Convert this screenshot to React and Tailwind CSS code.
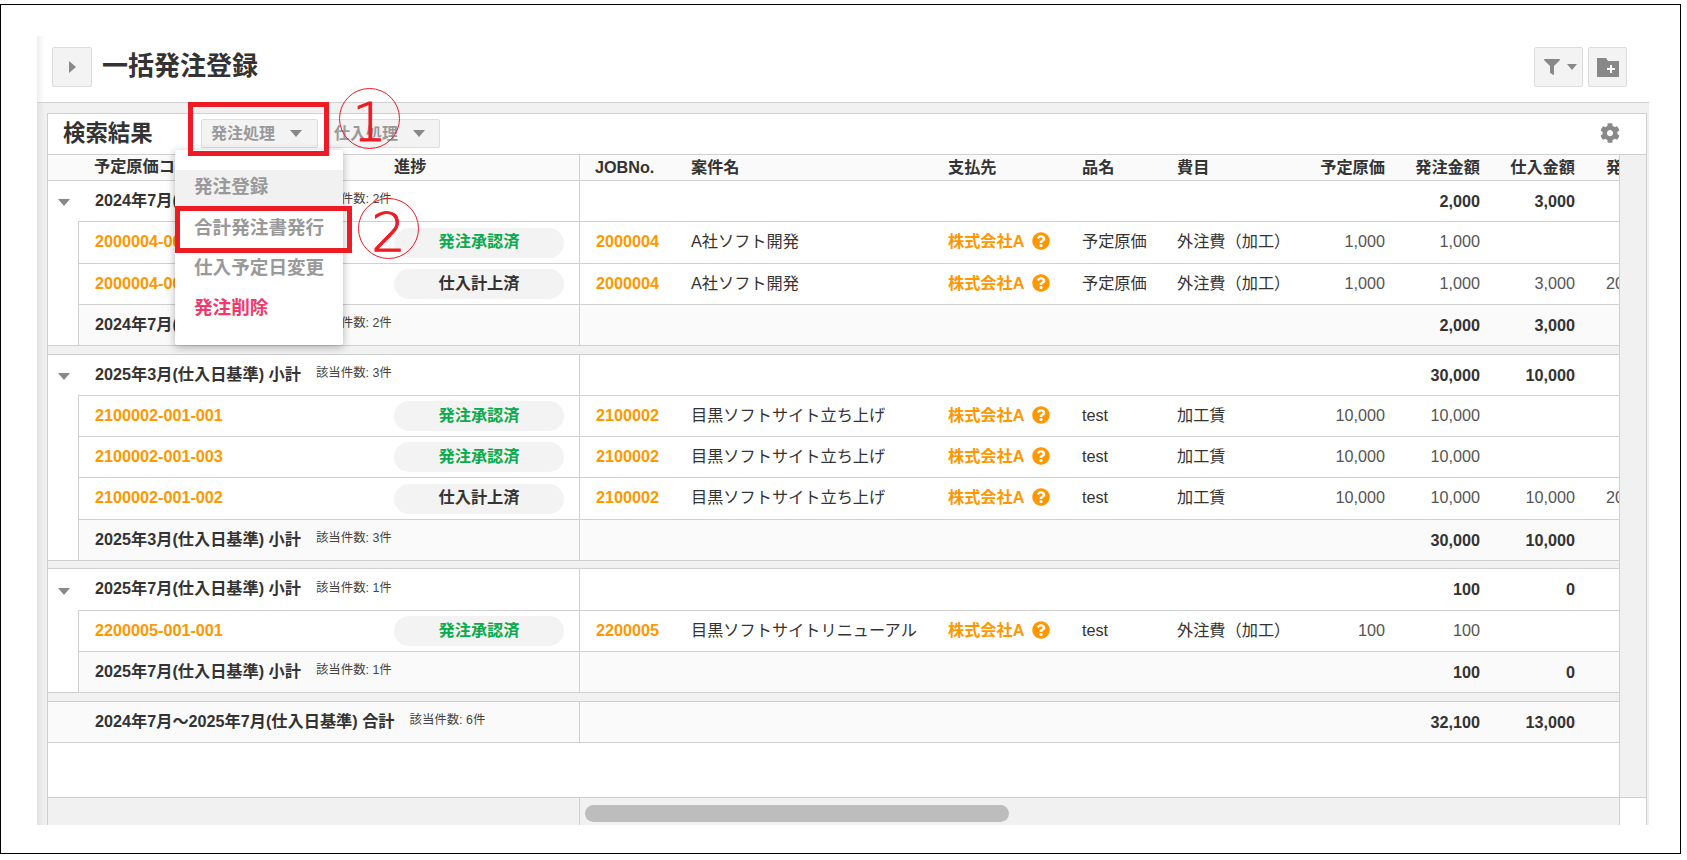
import React from 'react';
import { FaFilter, FaCog, FaQuestionCircle } from 'react-icons/fa';

const rowGrid = 'grid h-full grid-cols-[96px_257px_134px_95px_238px_95px_95px_30px] items-center pb-[2px]';
const line = 'border-[#d0d0d0]';
const orange = 'text-[#ff9800]';

// Small downward triangle used on buttons and group rows
const Caret = ({ className = '' }) => (
    <span className={`inline-block h-0 w-0 border-x-[6px] border-t-[7px] border-x-transparent border-t-[#888] ${className}`} />
);

const Num = ({ children, bold }) => (
    <div className={`pr-[15px] text-right ${bold ? 'font-bold text-[#333]' : 'text-[#555]'}`}>{children}</div>
);

const Summary = ({ label, count }) => (
    <div className="flex items-center whitespace-nowrap pb-[2px]">
        <span className="font-bold text-[#333]">{label}</span>
        <span className="-mt-[1px] ml-[15px] text-[12.4px] text-[#444]">該当件数: {count}件</span>
    </div>
);

const SummaryTotals = ({ order, purchase }) => (
    <div className={rowGrid}>
        <div /><div /><div /><div /><div />
        <div className="pt-[2px]"><Num bold>{order}</Num></div>
        <div className="pt-[2px]"><Num bold>{purchase}</Num></div>
    </div>
);

const GroupRow = ({ h, label, count, order, purchase }) => (
    <div className={`flex ${h}`}>
        <div className="flex w-[30px] items-center pl-[10px]"><Caret className="mt-[2px]" /></div>
        <div className={`flex w-[501px] items-center border-b pl-[17px] ${line}`}>
            <Summary label={label} count={count} />
        </div>
        <div className={`w-[1040px] border-b border-l ${line}`}>
            <SummaryTotals order={order} purchase={purchase} />
        </div>
    </div>
);

const DataRow = ({ h, code, done, job, name, item, kind, cost, order, purchase, date }) => (
    <div className={`flex ${h}`}>
        <div className="w-[30px]" />
        <div className={`flex w-[501px] items-center border-b border-l pl-[16px] ${line}`}>
            <div className={`w-[299px] pb-[2px] font-bold ${orange}`}>{code}</div>
            <div className={`flex h-[30px] w-[170px] items-center justify-center rounded-full bg-[#f3f3f3] pb-[2px] font-bold ${done ? 'text-[#333]' : 'text-[#0aaa4e]'}`}>
                {done ? '仕入計上済' : '発注承認済'}
            </div>
        </div>
        <div className={`w-[1040px] overflow-hidden border-b border-l ${line}`}>
            <div className={rowGrid}>
                <div className={`pl-[16px] font-bold ${orange}`}>{job}</div>
                <div className="whitespace-nowrap pl-[15px] text-[#333]">{name}</div>
                <div className={`flex items-center pl-[15px] font-bold ${orange}`}>
                    株式会社A
                    <FaQuestionCircle className="ml-[8px] text-[18px]" />
                </div>
                <div className="pl-[15px] text-[#333]">{item}</div>
                <div className="flex justify-between">
                    <span className="pl-[15px] text-[#333]">{kind}</span>
                    <Num>{cost}</Num>
                </div>
                <Num>{order}</Num>
                <Num>{purchase}</Num>
                <div className="overflow-hidden whitespace-nowrap pl-[16px] text-[#555]">{date}</div>
            </div>
        </div>
    </div>
);

const SubtotalRow = ({ h, label, count, order, purchase }) => (
    <div className={`flex ${h} border-b ${line}`}>
        <div className="w-[30px]" />
        <div className={`flex w-[501px] items-center border-l bg-[#fafafa] pl-[16px] ${line}`}>
            <Summary label={label} count={count} />
        </div>
        <div className={`w-[1040px] border-l bg-[#fafafa] ${line}`}>
            <SummaryTotals order={order} purchase={purchase} />
        </div>
    </div>
);

const Band = ({ h }) => <div className={`${h} border-b bg-[#f1f1f1] ${line}`} />;

const MenuItem = ({ className = '', children }) => (
    <div className={`flex h-[40px] items-center pb-[5px] pl-[19px] text-[18.6px] font-bold ${className}`}>{children}</div>
);

const NumberMark = ({ className, children }) => (
    <div className={`absolute flex h-[61px] w-[61px] items-center justify-center rounded-full border-[1.5px] border-[#ed1c24] pt-[9px] text-[54px] font-extralight leading-none text-[#ed1c24] [-webkit-text-stroke:1px_#ed1c24] [font-family:'DejaVu_Sans',sans-serif] ${className}`}>
        {children}
    </div>
);

export default function App() {
    return (
        <div className="relative h-[860px] w-[1687px] overflow-hidden bg-white pt-[4px] text-[16.2px] [font-family:'Liberation_Sans','Noto_Sans_CJK_JP',sans-serif]">
            <div className="h-[850px] w-[1681px] border border-black pl-[36px] pt-[31px]">
                <div className="flex h-[789px] w-[1612px] flex-col">
                    {/* Page title */}
                    <div className="flex h-[66px] bg-[linear-gradient(90deg,#f0f0f0,#fff_8px)] pl-[15px] pr-[22px] pt-[11px]">
                        <div className="flex h-[40px] w-[40px] items-center justify-center rounded-[2px] border border-[#ddd] bg-[#f3f3f3]">
                            <span className="h-0 w-0 border-y-[6px] border-l-[7px] border-y-transparent border-l-[#888]" />
                        </div>
                        <h1 className="ml-[10px] text-[26px] font-bold leading-[38px] text-[#333]">一括発注登録</h1>
                        <div className="ml-auto flex h-[40px] w-[49px] items-center rounded-[2px] border border-[#ddd] bg-[#f3f3f3] pl-[9px]">
                            <FaFilter className="text-[16px] text-[#888]" />
                            <span className="ml-[7px] h-0 w-0 border-x-[5px] border-t-[6px] border-x-transparent border-t-[#888]" />
                        </div>
                        <div className="ml-[5px] flex h-[40px] w-[39px] items-center justify-center rounded-[2px] border border-[#ddd] bg-[#f3f3f3]">
                            <svg width="22" height="19" viewBox="0 0 22 19">
                                <path d="M0 0h9l2 3h11v16H0z" fill="#888" />
                                <path d="M14 7v8M10 11h8" stroke="#fff" strokeWidth="2" />
                            </svg>
                        </div>
                    </div>

                    {/* Result panel */}
                    <div className={`min-h-0 flex-1 border-t bg-[linear-gradient(90deg,#e2e2e2,#f1f1f1_8px)] pl-[10px] pr-[2px] pt-[10px] ${line}`}>
                        <div className={`flex h-full flex-col border-x border-t bg-white ${line}`}>
                            <div className={`flex h-[41px] shrink-0 items-center border-b pl-[15px] pr-[26px] ${line}`}>
                                <div className="-mt-[1px] w-[138px] text-[22.4px] font-bold text-[#333]">検索結果</div>
                                <div className="-mt-[1px] flex h-[29px] w-[117px] items-center rounded-[2px] border border-[#ddd] bg-[#f3f3f3] pl-[9px] text-[16px] font-bold text-[#999]">
                                    発注処理<Caret className="ml-[15px]" />
                                </div>
                                <div className="-mt-[1px] ml-[7px] flex h-[29px] w-[115px] items-center rounded-[2px] border border-[#ddd] bg-[#f3f3f3] pl-[8px] text-[16px] font-bold text-[#999]">
                                    仕入処理<Caret className="ml-[15px]" />
                                </div>
                                <FaCog className="-mt-[2px] ml-auto text-[20px] text-[#888]" />
                            </div>

                            <div className="flex min-h-0 flex-1">
                                <div className="flex w-[1571px] flex-col">
                                    <div className={`flex h-[26px] shrink-0 border-b bg-[#fafafa] font-bold text-[#333] ${line}`}>
                                        <div className="flex w-[531px] items-center pb-[2px] pl-[46px]">
                                            <div className="w-[300px]">予定原価コード</div>
                                            <div>進捗</div>
                                        </div>
                                        <div className={`w-[1040px] overflow-hidden border-l ${line}`}>
                                            <div className={rowGrid}>
                                                <div className="pl-[15px]">JOBNo.</div>
                                                <div className="pl-[15px]">案件名</div>
                                                <div className="pl-[15px]">支払先</div>
                                                <div className="pl-[15px]">品名</div>
                                                <div className="flex justify-between">
                                                    <span className="pl-[15px]">費目</span>
                                                    <div className="pr-[15px]">予定原価</div>
                                                </div>
                                                <div className="pr-[15px] text-right">発注金額</div>
                                                <div className="pr-[15px] text-right">仕入金額</div>
                                                <div className="overflow-hidden whitespace-nowrap pl-[16px]">発注日</div>
                                            </div>
                                        </div>
                                    </div>

                                    <GroupRow h="h-[41px]" label="2024年7月(仕入日基準) 小計" count={2} order="2,000" purchase="3,000" />
                                    <DataRow h="h-[42px]" code="2000004-001-001" job="2000004" name="A社ソフト開発" item="予定原価" kind="外注費（加工）" cost="1,000" order="1,000" />
                                    <DataRow h="h-[41px]" code="2000004-001-002" done job="2000004" name="A社ソフト開発" item="予定原価" kind="外注費（加工）" cost="1,000" order="1,000" purchase="3,000" date="2024/07/31" />
                                    <SubtotalRow h="h-[41px]" label="2024年7月(仕入日基準) 小計" count={2} order="2,000" purchase="3,000" />
                                    <Band h="h-[9px]" />

                                    <GroupRow h="h-[41px]" label="2025年3月(仕入日基準) 小計" count={3} order="30,000" purchase="10,000" />
                                    <DataRow h="h-[41px]" code="2100002-001-001" job="2100002" name="目黒ソフトサイト立ち上げ" item="test" kind="加工賃" cost="10,000" order="10,000" />
                                    <DataRow h="h-[41px]" code="2100002-001-003" job="2100002" name="目黒ソフトサイト立ち上げ" item="test" kind="加工賃" cost="10,000" order="10,000" />
                                    <DataRow h="h-[42px]" code="2100002-001-002" done job="2100002" name="目黒ソフトサイト立ち上げ" item="test" kind="加工賃" cost="10,000" order="10,000" purchase="10,000" date="2025/03/31" />
                                    <SubtotalRow h="h-[41px]" label="2025年3月(仕入日基準) 小計" count={3} order="30,000" purchase="10,000" />
                                    <Band h="h-[8px]" />

                                    <GroupRow h="h-[42px]" label="2025年7月(仕入日基準) 小計" count={1} order="100" purchase="0" />
                                    <DataRow h="h-[41px]" code="2200005-001-001" job="2200005" name="目黒ソフトサイトリニューアル" item="test" kind="外注費（加工）" cost="100" order="100" />
                                    <SubtotalRow h="h-[41px]" label="2025年7月(仕入日基準) 小計" count={1} order="100" purchase="0" />
                                    <Band h="h-[9px]" />

                                    <div className={`flex h-[41px] shrink-0 border-b bg-[#fafafa] ${line}`}>
                                        <div className="flex w-[531px] items-center pl-[47px]">
                                            <Summary label="2024年7月～2025年7月(仕入日基準) 合計" count={6} />
                                        </div>
                                        <div className={`w-[1040px] border-l ${line}`}>
                                            <SummaryTotals order="32,100" purchase="13,000" />
                                        </div>
                                    </div>

                                    <div className={`min-h-0 flex-1 border-b ${line}`} />

                                    <div className="flex h-[27px] shrink-0 bg-[#f1f1f1]">
                                        <div className="w-[531px]" />
                                        <div className={`w-[1040px] border-l pl-[5px] pt-[7px] ${line}`}>
                                            <div className="h-[17px] w-[424px] rounded-full bg-[#bdbdbd]" />
                                        </div>
                                    </div>
                                </div>

                                <div className="flex flex-1 flex-col">
                                    <div className={`min-h-0 flex-1 border-b border-l bg-[#f1f1f1] ${line}`} />
                                    <div className={`h-[27px] border-l ${line}`} />
                                </div>
                            </div>
                        </div>
                    </div>
                </div>
            </div>

            {/* Open dropdown */}
            <div className="absolute left-[175px] top-[150px] h-[195px] w-[168px] rounded-[2px] bg-white pt-[20px] text-[#999] shadow-[0_2px_8px_rgba(0,0,0,0.3)]">
                <MenuItem className="h-[37px] bg-[#f1f1f1] !pb-[7px]">発注登録</MenuItem>
                <MenuItem>合計発注書発行</MenuItem>
                <MenuItem>仕入予定日変更</MenuItem>
                <MenuItem className="text-[#f0386b]">発注削除</MenuItem>
            </div>

            {/* Manual annotations */}
            <div className="absolute left-[188px] top-[102px] h-[54px] w-[141px] border-[5px] border-[#ed1c24]" />
            <div className="absolute left-[175px] top-[206px] h-[47px] w-[177px] border-[5px] border-[#ed1c24]" />
            <NumberMark className="left-[339px] top-[88px]">1</NumberMark>
            <NumberMark className="left-[358px] top-[198px]">2</NumberMark>
        </div>
    );
}
